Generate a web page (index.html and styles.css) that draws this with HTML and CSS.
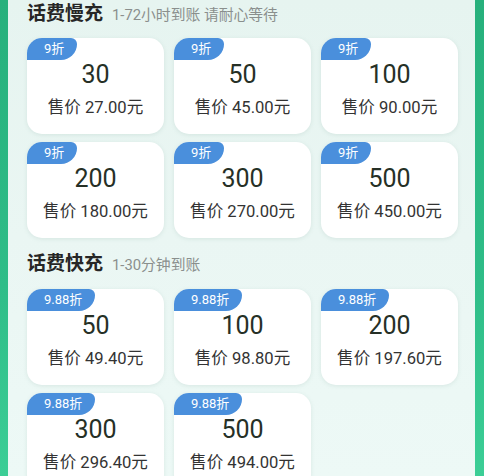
FILE: index.html
```html
<!DOCTYPE html>
<html lang="zh-CN">
<head>
<meta charset="utf-8">
<link rel="stylesheet" href="styles.css">
</head>
<body>
<div class="frame">
  <div class="panel">
    <section class="section first">
      <div class="head"><span class="title">话费慢充</span><span class="sub">1-72小时到账 请耐心等待</span></div>
      <div class="grid">
        <div class="card"><span class="badge">9折</span><div class="amount">30</div><div class="price">售价 27.00元</div></div>
        <div class="card"><span class="badge">9折</span><div class="amount">50</div><div class="price">售价 45.00元</div></div>
        <div class="card"><span class="badge">9折</span><div class="amount">100</div><div class="price">售价 90.00元</div></div>
        <div class="card"><span class="badge">9折</span><div class="amount">200</div><div class="price">售价 180.00元</div></div>
        <div class="card"><span class="badge">9折</span><div class="amount">300</div><div class="price">售价 270.00元</div></div>
        <div class="card"><span class="badge">9折</span><div class="amount">500</div><div class="price">售价 450.00元</div></div>
      </div>
    </section>
    <section class="section second">
      <div class="head"><span class="title">话费快充</span><span class="sub">1-30分钟到账</span></div>
      <div class="grid">
        <div class="card"><span class="badge">9.88折</span><div class="amount">50</div><div class="price">售价 49.40元</div></div>
        <div class="card"><span class="badge">9.88折</span><div class="amount">100</div><div class="price">售价 98.80元</div></div>
        <div class="card"><span class="badge">9.88折</span><div class="amount">200</div><div class="price">售价 197.60元</div></div>
        <div class="card"><span class="badge">9.88折</span><div class="amount">300</div><div class="price">售价 296.40元</div></div>
        <div class="card"><span class="badge">9.88折</span><div class="amount">500</div><div class="price">售价 494.00元</div></div>
      </div>
    </section>
  </div>
</div>
</body>
</html>
```
FILE: styles.css
```css
html, body {
  margin: 0;
  padding: 0;
  height: 100%;
  overflow: hidden;
}
body {
  background: linear-gradient(180deg, #27b07c 0%, #2fbd88 60%, #3cce96 100%);
  font-family: "Roboto", "Noto Sans CJK SC", sans-serif;
}
.frame {
  height: 100%;
  padding: 0 9px 0 8px;
  box-sizing: border-box;
}
.panel {
  height: 100%;
  background: linear-gradient(180deg, #e6f4f0 0%, #eaf6f3 50%, #edf9f6 100%);
  padding: 0 17px 0 19px;
  box-sizing: border-box;
}
.head {
  display: flex;
  align-items: baseline;
  height: 27px;
  line-height: 27px;
}
.title {
  font-size: 19px;
  font-weight: 700;
  color: #262626;
}
.sub {
  margin-left: 9px;
  font-size: 14.8px;
  color: #8a8f8d;
}
.first .head { margin-bottom: 11px; }
.second { margin-top: 12px; }
.second .head { margin-bottom: 12px; }
.grid {
  display: grid;
  grid-template-columns: repeat(3, 137px);
  column-gap: 10px;
  row-gap: 8px;
}
.card {
  height: 96px;
  background: #fff;
  border-radius: 15px;
  overflow: hidden;
  box-shadow: 0 1px 4px rgba(120, 160, 150, 0.18);
  display: flex;
  flex-direction: column;
  align-items: center;
}
.badge {
  align-self: flex-start;
  height: 22px;
  line-height: 22px;
  padding: 0 13px 0 17px;
  background: #4a8fdc;
  color: #fff;
  font-size: 13px;
  border-radius: 0 6px 16px 0;
}
.amount {
  height: 28px;
  line-height: 30px;
  font-size: 25px;
  color: #263026;
}
.price {
  margin-top: 9px;
  height: 22px;
  line-height: 22px;
  font-size: 16.6px;
  color: #333;
}
```
